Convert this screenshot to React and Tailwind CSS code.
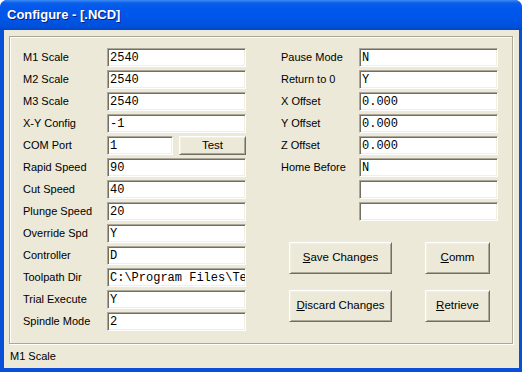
import React from "react"

const leftRows = [
  ["M1 Scale", "2540"],
  ["M2 Scale", "2540"],
  ["M3 Scale", "2540"],
  ["X-Y Config", "-1"],
  ["COM Port", "1", true],
  ["Rapid Speed", "90"],
  ["Cut Speed", "40"],
  ["Plunge Speed", "20"],
  ["Override Spd", "Y"],
  ["Controller", "D"],
  ["Toolpath Dir", "C:\\Program Files\\Te"],
  ["Trial Execute", "Y"],
  ["Spindle Mode", "2"],
]

const rightRows = [
  ["Pause Mode", "N"],
  ["Return to 0", "Y"],
  ["X Offset", "0.000"],
  ["Y Offset", "0.000"],
  ["Z Offset", "0.000"],
  ["Home Before", "N"],
  ["", ""],
  ["", ""],
]

const sans = { fontFamily: '"Liberation Sans", Arial, sans-serif' }

const TextBox = ({ value, className = "w-[139px]" }) => (
  <div
    className={`${className} h-[19px] bg-white border border-t-[#aca899] border-l-[#aca899] border-b-white border-r-white shadow-[inset_1px_1px_0_#716f64,inset_-1px_-1px_0_#f1efe2] pl-[2px] pt-[1px] flex items-center overflow-hidden whitespace-pre text-[12px] text-black`}
    style={{ fontFamily: '"Liberation Mono", "Courier New", monospace' }}
  >
    {value}
  </div>
)

const Button = ({ children, className }) => (
  <div
    className={`${className} bg-[#ece9d8] border border-t-white border-l-white border-b-[#716f64] border-r-[#716f64] shadow-[inset_1px_1px_0_#f1efe2,inset_-1px_-1px_0_#aca899] flex items-center justify-center text-[11.5px] text-black`}
    style={sans}
  >
    {children}
  </div>
)

const Row = ({ label, value, test, labelWidth }) => (
  <div className="flex items-center h-[19px]">
    <div className={`${labelWidth} text-[11px] text-black whitespace-nowrap`} style={sans}>
      {label}
    </div>
    {test ? (
      <div className="flex">
        <TextBox value={value} className="w-[66px]" />
        <Button className="w-[67px] h-[19px] ml-[6px]">Test</Button>
      </div>
    ) : (
      <TextBox value={value} />
    )}
  </div>
)

export default function App() {
  return (
    <div className="w-[522px] h-[372px] bg-[#0a4fd8] rounded-t-[7px] flex flex-col overflow-hidden">
      {/* Title bar */}
      <div className="h-[30px] shrink-0 rounded-t-[7px] bg-[linear-gradient(to_bottom,#3c8cf5_0px,#0a5ee9_3px,#0058ee_8px,#0055e6_20px,#004fd9_27px,#0046c8_30px)] flex items-center pl-[7px]">
        <span
          className="text-white font-bold text-[13px] [text-shadow:1px_1px_0_#0a1e7a]"
          style={sans}
        >
          Configure - [.NCD]
        </span>
      </div>

      {/* Client */}
      <div className="flex-1 ml-[4px] mr-[3px] mb-[4px] bg-[#ece9d8] flex flex-col">
        <div className="mt-[6px] ml-[5px] w-[504px] h-[308px] border border-[#aca899] shadow-[inset_1px_1px_0_#fff,1px_1px_0_#fff] flex pt-[11px] pl-[13px]">
          <div className="flex flex-col gap-[3px]">
            {leftRows.map(([l, v, t], i) => (
              <Row key={i} label={l} value={v} test={t} labelWidth="w-[84px]" />
            ))}
          </div>
          <div className="flex flex-col ml-[35px]">
            <div className="flex flex-col gap-[3px]">
              {rightRows.map(([l, v], i) => (
                <Row key={i} label={l} value={v} labelWidth="w-[78px]" />
              ))}
            </div>
            <div className="flex flex-col gap-[16px] mt-[21px] ml-[8px]">
              <div className="flex gap-[33px]">
                <Button className="w-[103px] h-[32px]">
                  <span><u>S</u>ave Changes</span>
                </Button>
                <Button className="w-[65px] h-[32px]">
                  <span><u>C</u>omm</span>
                </Button>
              </div>
              <div className="flex gap-[33px]">
                <Button className="w-[103px] h-[32px]">
                  <span><u>D</u>iscard Changes</span>
                </Button>
                <Button className="w-[65px] h-[32px]">
                  <span><u>R</u>etrieve</span>
                </Button>
              </div>
            </div>
          </div>
        </div>
        <div className="flex-1 flex items-center pl-[6px] text-[11px] text-black" style={sans}>
          M1 Scale
        </div>
      </div>
    </div>
  )
}
